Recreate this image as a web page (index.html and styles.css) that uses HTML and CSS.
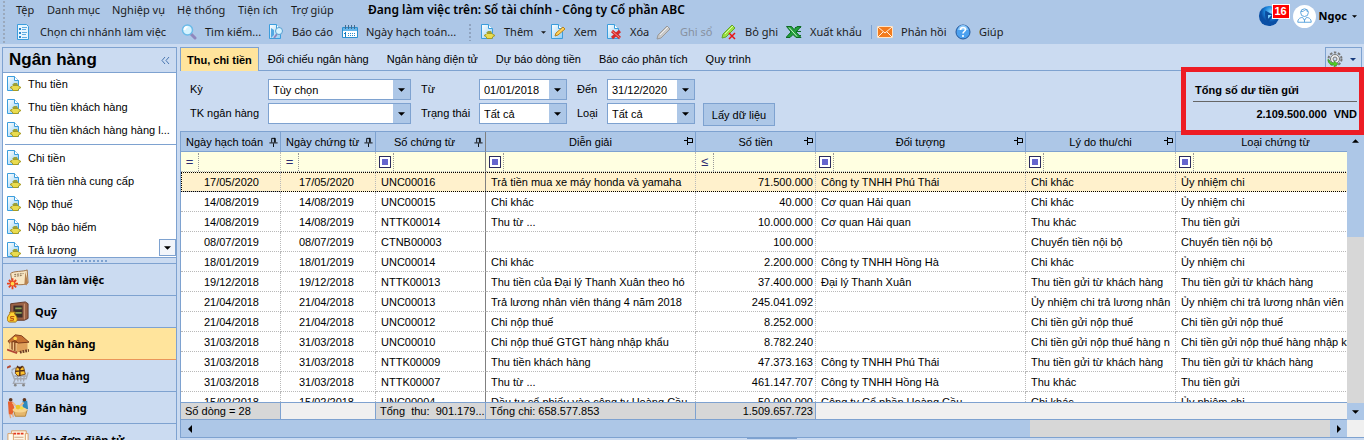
FILE: index.html
```html
<!DOCTYPE html>
<html lang="vi">
<head>
<meta charset="utf-8">
<title>Ngân hàng</title>
<link rel="stylesheet" href="styles.css">
</head>
<body>
<svg class="defs" aria-hidden="true">
  <defs>
    <linearGradient id="page" x2="1" y2="1"><stop offset="0" stop-color="#fff"/><stop offset="1" stop-color="#8fcdf3"/></linearGradient>
    <radialGradient id="ball" cx=".6" cy=".3"><stop offset="0" stop-color="#7fd4ff"/><stop offset=".6" stop-color="#1c86dc"/><stop offset="1" stop-color="#0a4fa5"/></radialGradient>
  </defs>
  <symbol id="doc" viewBox="0 0 16 16"><path d="M1.500.500h7l4 4v10h-11z" fill="url(#page)" stroke="#3b9ddd"/><path d="M8.500.500v4h4" fill="#fff" stroke="#3b9ddd"/></symbol>
  <symbol id="doc-coin" viewBox="0 0 16 16"><use href="#doc" width="16" height="16"/><path d="M6 9l2-2h3l1 2z" fill="#9aa23c"/><path d="M4 11.500l2-1 1-1h5l1 1 2 1-2 1-1 2H7l-1-2z" fill="#e9dc4f" stroke="#a79b22"/></symbol>
  <symbol id="caret" viewBox="0 0 8 4"><path d="M0 0h8L4 4z" fill="currentColor"/></symbol>
  <symbol id="pin-v" viewBox="0 0 9 11"><path d="M2.500 6V1.500h4V6M5.500 1v5M0 6.500h9M4.500 7v4" fill="none" stroke="#000"/></symbol>
  <symbol id="pin-h" viewBox="0 0 9 8"><path d="M4 1.500h4.500v4H4M4 5.500h5M3.500 0v8M0 3.500h3" fill="none" stroke="#000"/></symbol>
</svg>

<header class="top">
  <div class="bars">
    <nav class="menu">
      <a href="#">Tệp</a><a href="#">Danh mục</a><a href="#">Nghiệp vụ</a><a href="#">Hệ thống</a><a href="#">Tiện ích</a><a href="#">Trợ giúp</a>
      <strong>Đang làm việc trên: Sổ tài chính - Công ty Cổ phần ABC</strong>
    </nav>
    <div class="tools">
      <button><svg viewBox="0 0 16 16"><path d="M1.500.500h9l2 2v13h-11z" fill="#e6f5ff" stroke="#3b9ddd"/><path d="M3 4h2v2H3zm0 4h2v2H3zm0 4h2v2H3z" fill="#2b86c9"/><path d="M6 3.500h5M6 5.500h4M6 8.500h5M6 10.500h4M6 13.500h5" stroke="#61aee2"/></svg>Chọn chi nhánh làm việc</button>
      <button><svg viewBox="0 0 16 16"><path d="M10 10l4 4" stroke="#8f87bd" stroke-width="3" stroke-linecap="round"/><circle cx="6.500" cy="6" r="5" fill="#d5f3ff" stroke="#6bbbe8" stroke-width="1.500"/><path d="M3.500 6a3 3 0 013-3" stroke="#fff" stroke-width="2" fill="none"/></svg>Tìm kiếm...</button>
      <button><svg viewBox="0 0 16 16"><use href="#doc" width="16" height="16"/><path d="M3 4v10l3-3V6z" fill="#52a8e2"/><path d="M9 10l-3 4" stroke="#8f87bd" stroke-width="2"/><circle cx="11" cy="7" r="3.500" fill="#d5f3ff" stroke="#569ed0"/></svg>Báo cáo</button>
      <button><svg viewBox="0 0 16 16"><path d="M.500 3.500h15v10H.500z" fill="#fff" stroke="#2b8fce"/><path d="M1 4h14v3H1z" fill="#64b5ea"/><path d="M3.500 1v4M6.500 1v4M9.500 1v4M12.500 1v4" stroke="#456b8c"/><path d="M3.500 8v5M2 9.500h2" stroke="#1479c0"/><path d="M6 9.500h8M6 11.500h8" stroke="#2b8fce" stroke-dasharray="1 1"/></svg>Ngày hạch toán...</button>
      <button class="add"><svg viewBox="0 0 16 16"><use href="#doc-coin" width="16" height="16"/></svg>Thêm<svg class="caret"><use href="#caret"/></svg></button>
      <button><svg viewBox="0 0 16 16"><use href="#doc" width="16" height="16"/><path d="M5 12l1-3 7-6 2 2-7 6z" fill="#ffd25a" stroke="#b88220"/></svg>Xem</button>
      <button><svg viewBox="0 0 16 16"><use href="#doc" width="16" height="16"/><path d="M6 7l8 7M14 7l-8 7" stroke="#d52b2b" stroke-width="3"/><path d="M6.500 7.500l7 6" stroke="#ff8f86"/></svg>Xóa</button>
      <button disabled><svg viewBox="0 0 16 16"><path d="M1 15l1-4 9-9 3 3-9 9z" fill="#c9c9c9" stroke="#999"/><path d="M4 11l8-8" stroke="#eee"/></svg>Ghi sổ</button>
      <button><svg viewBox="0 0 16 16"><path d="M1 14l1-4 9-9 3 3-9 9z" fill="#9be044" stroke="#63a62a"/><path d="M4 10l8-8" stroke="#dbffa4"/><path d="M8 9l6 6M14 9l-6 6" stroke="#e81313" stroke-width="1.500"/></svg>Bỏ ghi</button>
      <button><svg viewBox="0 0 16 16"><path d="M9 3.500h6M11 7.500h4M11 11.500h4" stroke="#0f6a24"/><path d="M.500 2.500h5l2.500 3 3-3h4l-5 5.500 5 5.500h-5l-3-3-3 3h-4l5-5.500z" fill="#21a03a" stroke="#0f6a24"/><path d="M3 3.500l8 9" stroke="#c7efc9"/></svg>Xuất khẩu</button>
      <button class="mail"><svg viewBox="0 0 16 16"><path d="M.500 2.500h15v11H.500z" fill="#f37b1d" stroke="#ffe4c5"/><path d="M1 3l7 6 7-6M1 13l5-5M15 13l-5-5" fill="none" stroke="#fff3e4"/></svg>Phản hồi</button>
      <button><svg viewBox="0 0 16 16"><circle cx="8" cy="8" r="7" fill="#4ba0ef" stroke="#24589b"/><path d="M3 6a5 5 0 0110 0z" fill="#8bc8fb"/><path d="M5.500 6c0-3.500 5-3 5-.500C10.500 7.500 8 7.500 8 9.500M8 11v2" fill="none" stroke="#fff" stroke-width="1.600"/></svg>Giúp</button>
    </div>
  </div>
  <div class="account">
    <span class="bell"><svg viewBox="0 0 24 24"><circle cx="12" cy="12" r="11" fill="url(#ball)"/><path d="M8 6l9 5-6 8c-3-3-4-8-3-13z" fill="#0c4d9f"/><path d="M11 11h4l-4 4z" fill="#7fd4ff"/></svg><b>16</b></span>
    <svg class="avatar" viewBox="0 0 24 24"><circle cx="12" cy="12" r="12" fill="#fff"/><circle cx="12" cy="8" r="4" fill="none" stroke="#5aa3dc"/><path d="M8 7c2 0 4-1 5-2 1 1 2 2 3 2M5 18c0-4 3-5 5-5l2 3 2-3c2 0 5 1 5 5zM12 15v3" fill="none" stroke="#5aa3dc"/></svg>
    <button>Ngọc<svg class="caret"><use href="#caret"/></svg></button>
  </div>
</header>

<main class="work">
  <aside class="side">
    <div class="side-head"><h1>Ngân hàng</h1><button aria-label="Thu gọn"><svg viewBox="0 0 9 7"><path d="M4 0L1 3.500 4 7M8 0L5 3.500 8 7" fill="none" stroke="#4a76b0"/></svg></button></div>
    <div class="links">
      <ul>
        <li><a href="#"><svg><use href="#doc-coin"/></svg>Thu tiền</a></li>
        <li><a href="#"><svg><use href="#doc-coin"/></svg>Thu tiền khách hàng</a></li>
        <li><a href="#"><svg><use href="#doc-coin"/></svg>Thu tiền khách hàng hàng l...</a></li>
      </ul>
      <ul>
        <li><a href="#"><svg><use href="#doc-coin"/></svg>Chi tiền</a></li>
        <li><a href="#"><svg><use href="#doc-coin"/></svg>Trả tiền nhà cung cấp</a></li>
        <li><a href="#"><svg><use href="#doc-coin"/></svg>Nộp thuế</a></li>
        <li><a href="#"><svg><use href="#doc-coin"/></svg>Nộp bảo hiểm</a></li>
        <li><a href="#"><svg><use href="#doc-coin"/></svg>Trả lương</a></li>
      </ul>
      <button class="more" aria-label="Cuộn xuống"><svg class="caret"><use href="#caret"/></svg></button>
    </div>
    <div class="splitter"></div>
    <nav class="modules">
      <a href="#"><svg viewBox="0 0 24 24"><path d="M4 5c2-3 15-2 18-4l1 14c-3 3-12 2-17 2z" fill="#f7e6c4" stroke="#9b6b3b"/><path d="M20 3l3 12-2 3-2-2z" fill="#b88350"/><path d="M8 6l10-1M8 8l9-1" stroke="#786044" stroke-dasharray="2 1"/><path d="M6 10v12M0 16h12M2 12l8 8M10 12l-8 8" stroke="#e9441e" stroke-width="2"/><circle cx="6" cy="16" r="2" fill="#ffd84c"/></svg>Bàn làm việc</a>
      <a href="#"><svg viewBox="0 0 24 24"><path d="M4 3l16-2 3 2v16l-4 2H4z" fill="#9b6246" stroke="#5f3524"/><path d="M7 5h10v13H7z" fill="#3a2d28"/><path d="M9 8h7M9 13h7" stroke="#8ca052" stroke-width="2"/><path d="M19 3v17" stroke="#d09c7a"/><path d="M3 12h6l-1 2c5 4 3 9 1 9H3c-3 0-4-5 0-9z" fill="#ffd335" stroke="#a36c13"/><path d="M8 17H4v2h3v2H3" fill="none" stroke="#b1400c"/></svg>Quỹ</a>
      <a href="#" class="on"><svg viewBox="0 0 24 24"><path d="M3 9l8-5 11 5v9l-11 3-8-4z" fill="#8a4a20"/><path d="M10 11l12-1v8l-11 3z" fill="#e0a05a"/><path d="M1 9l8-7 7 1 8 7-12 1-3-3-6 3z" fill="#c87332" stroke="#7a3819"/><path d="M4 10v8M7 10v9M10 11v9" stroke="#f1c488" stroke-width="1.500"/><path d="M0 18l11 4" stroke="#b24735" stroke-width="2"/><path d="M14 21l10-2" stroke="#6b3a22" stroke-width="3" stroke-dasharray="2 1"/><circle cx="9" cy="6" r="2" fill="#ffd84c"/></svg>Ngân hàng</a>
      <a href="#"><svg viewBox="0 0 24 24"><path d="M0 3l4-1M5 6c2-3 5-3 6-2M5 7l3 8h13l2-7M9 15l-2 5h13M8 12h13M11 11l1 7M15 11v7M19 11l-1 7" fill="none" stroke="#a4a8b2" stroke-width="1.500"/><path d="M0 3l4-2" stroke="#b64b36" stroke-width="2"/><circle cx="9" cy="22" r="1.500" fill="#888"/><circle cx="18" cy="22" r="1.500" fill="#888"/><path d="M10 3l8-1 2 8-8 2-3-3z" fill="#ffc32d" stroke="#76461a"/><path d="M14 2v10M9 7l10-1M14 4l-3-3M14 4l3-3" stroke="#4f2b19" stroke-width="1.500"/></svg>Mua hàng</a>
      <a href="#"><svg viewBox="0 0 24 24"><path d="M1 5h5l2 7-2 7H2z" fill="#e8612e"/><path d="M3 19l1 4M6 18l1 4" stroke="#e8a878" stroke-width="1.500"/><path d="M17 4h5l1 9h-6z" fill="#2f89bd"/><circle cx="4" cy="3" r="2" fill="#613720"/><circle cx="19" cy="3" r="2" fill="#613720"/><path d="M6 6l5 5M18 6l-5 5" stroke="#f0b986" stroke-width="2"/><path d="M7 14h15l-2 7H9z" fill="#e5b66b" stroke="#b58134"/><ellipse cx="14" cy="14" rx="8" ry="3" fill="#f8d58d"/><circle cx="12" cy="11" r="2.500" fill="#e9c52a"/><circle cx="16" cy="12" r="2" fill="#f4dd48"/></svg>Bán hàng</a>
      <a href="#"><svg viewBox="0 0 24 24"><path d="M5 2h16v20H5z" fill="#fff7e5" stroke="#d89b61"/><path d="M1 5h6v18H1zM20 5h3v18h-3z" fill="#fffaf0" stroke="#d89b61"/><path d="M7 5h12" stroke="#e2361d" stroke-width="2" stroke-dasharray="3 1"/><path d="M8 9h10M8 12h10" stroke="#ca9d7b"/></svg>Hóa đơn điện tử</a>
    </nav>
  </aside>

  <section class="content">
    <div class="tabs">
      <button class="on">Thu, chi tiền</button><button>Đối chiếu ngân hàng</button><button>Ngân hàng điện tử</button><button>Dự báo dòng tiền</button><button>Báo cáo phân tích</button><button>Quy trình</button>
      <button class="gear" aria-label="Tùy chỉnh"><svg viewBox="0 0 16 16"><circle cx="8" cy="8" r="6.500" fill="none" stroke="#777" stroke-width="2" stroke-dasharray="2.500 1.600"/><circle cx="8" cy="8" r="4.500" fill="#eee" stroke="#777"/><circle cx="8" cy="8" r="2" fill="#cbdbf1" stroke="#777"/><path d="M1 8c0 5 3 6 6 6v2l4-3-4-3v2c-2 0-4-1-6-4z" fill="#55cc27" stroke="#2c8f16" stroke-width=".5"/></svg><svg class="caret"><use href="#caret"/></svg></button>
    </div>

    <form class="filters">
      <label for="ky">Kỳ</label>
      <span class="combo"><select id="ky"><option>Tùy chọn</option></select><svg class="caret"><use href="#caret"/></svg></span>
      <label for="tu">Từ</label>
      <span class="combo"><input id="tu" type="text" value="01/01/2018"><svg class="caret"><use href="#caret"/></svg></span>
      <label for="den">Đến</label>
      <span class="combo"><input id="den" type="text" value="31/12/2020"><svg class="caret"><use href="#caret"/></svg></span>
      <label class="line2" for="tk">TK ngân hàng</label>
      <span class="combo"><select id="tk"><option></option></select><svg class="caret"><use href="#caret"/></svg></span>
      <label for="tt">Trạng thái</label>
      <span class="combo"><select id="tt"><option>Tất cả</option></select><svg class="caret"><use href="#caret"/></svg></span>
      <label for="loai">Loại</label>
      <span class="combo"><select id="loai"><option>Tất cả</option></select><svg class="caret"><use href="#caret"/></svg></span>
      <button type="button">Lấy dữ liệu</button>
    </form>

    <div class="total">
      <h2>Tổng số dư tiền gửi</h2>
      <p><span>2.109.500.000</span><span>VND</span></p>
    </div>

    <div class="grid">
      <div class="rows">
        <table>
          <colgroup><col class="w100"><col class="w95"><col class="w110"><col class="w210"><col class="w120"><col class="w210"><col class="w150"><col class="w200"></colgroup>
          <thead>
            <tr>
              <th><div>Ngày hạch toán<svg class="pv"><use href="#pin-v"/></svg></div></th>
              <th><div>Ngày chứng từ<svg class="pv"><use href="#pin-v"/></svg></div></th>
              <th><div>Số chứng từ<svg class="pv"><use href="#pin-v"/></svg></div></th>
              <th><div>Diễn giải<svg class="ph"><use href="#pin-h"/></svg></div></th>
              <th><div>Số tiền<svg class="ph"><use href="#pin-h"/></svg></div></th>
              <th><div>Đối tượng<svg class="ph"><use href="#pin-h"/></svg></div></th>
              <th><div>Lý do thu/chi<svg class="ph"><use href="#pin-h"/></svg></div></th>
              <th><div>Loại chứng từ</div></th>
            </tr>
            <tr class="query">
              <td><span>=</span></td><td><span>=</span></td><td><span><i></i></span></td><td><span><i></i></span></td><td><span>≤</span></td><td><span><i></i></span></td><td><span><i></i></span></td><td><span><i></i></span></td>
            </tr>
          </thead>
          <tbody>
            <tr class="current"><td>17/05/2020</td><td>17/05/2020</td><td>UNC00016</td><td>Trả tiền mua xe máy honda và yamaha</td><td>71.500.000</td><td>Công ty TNHH Phú Thái</td><td>Chi khác</td><td>Ủy nhiệm chi</td></tr>
            <tr><td>14/08/2019</td><td>14/08/2019</td><td>UNC00015</td><td>Chi khác</td><td>40.000</td><td>Cơ quan Hải quan</td><td>Chi khác</td><td>Ủy nhiệm chi</td></tr>
            <tr><td>14/08/2019</td><td>14/08/2019</td><td>NTTK00014</td><td>Thu từ ...</td><td>10.000.000</td><td>Cơ quan Hải quan</td><td>Thu khác</td><td>Thu tiền gửi</td></tr>
            <tr><td>08/07/2019</td><td>08/07/2019</td><td>CTNB00003</td><td></td><td>100.000</td><td></td><td>Chuyển tiền nội bộ</td><td>Chuyển tiền nội bộ</td></tr>
            <tr><td>18/01/2019</td><td>18/01/2019</td><td>UNC00014</td><td>Chi khác</td><td>2.200.000</td><td>Công ty TNHH Hồng Hà</td><td>Chi khác</td><td>Ủy nhiệm chi</td></tr>
            <tr><td>19/12/2018</td><td>19/12/2018</td><td>NTTK00013</td><td>Thu tiền của Đại lý Thanh Xuân theo hó</td><td>37.400.000</td><td>Đại lý Thanh Xuân</td><td>Thu tiền gửi từ khách hàng</td><td>Thu tiền gửi từ khách hàng</td></tr>
            <tr><td>21/04/2018</td><td>21/04/2018</td><td>UNC00013</td><td>Trả lương nhân viên tháng 4 năm 2018</td><td>245.041.092</td><td></td><td>Ủy nhiệm chi trả lương nhân</td><td>Ủy nhiệm chi trả lương nhân viên</td></tr>
            <tr><td>21/04/2018</td><td>21/04/2018</td><td>UNC00012</td><td>Chi nộp thuế</td><td>8.252.000</td><td></td><td>Chi tiền gửi nộp thuế</td><td>Chi tiền gửi nộp thuế</td></tr>
            <tr><td>31/03/2018</td><td>31/03/2018</td><td>UNC00010</td><td>Chi nộp thuế GTGT hàng nhập khẩu</td><td>8.782.240</td><td></td><td>Chi tiền gửi nộp thuế hàng n</td><td>Chi tiền gửi nộp thuế hàng nhập khẩu</td></tr>
            <tr><td>31/03/2018</td><td>31/03/2018</td><td>NTTK00009</td><td>Thu tiền khách hàng</td><td>47.373.163</td><td>Công ty TNHH Phú Thái</td><td>Thu tiền gửi từ khách hàng</td><td>Thu tiền gửi từ khách hàng</td></tr>
            <tr><td>31/03/2018</td><td>31/03/2018</td><td>NTTK00007</td><td>Thu từ ...</td><td>461.147.707</td><td>Công ty TNHH Hồng Hà</td><td>Thu khác</td><td>Thu tiền gửi</td></tr>
            <tr><td>15/02/2018</td><td>15/02/2018</td><td>UNC00004</td><td>Đầu tư cổ phiếu vào công ty Hoàng Cầu</td><td>50.000.000</td><td>Công ty Cổ phần Hoàng Cầu</td><td>Chi khác</td><td>Ủy nhiệm chi</td></tr>
          </tbody>
        </table>
      </div>
      <div class="vscroll"><button aria-label="Lên"><svg class="caret up"><use href="#caret"/></svg></button><div class="vthumb"></div><div class="vtrack"></div><button aria-label="Xuống"><svg class="caret"><use href="#caret"/></svg></button></div>
      <div class="sums">
        <table>
          <colgroup><col class="w100"><col class="w95"><col class="w110"><col class="w210"><col class="w120"><col class="w210"><col class="w150"><col class="w200"></colgroup>
          <tbody><tr><td class="sum">Số dòng = 28</td><td></td><td class="sum">Tổng &nbsp;thu: &nbsp;901.179....</td><td class="sum">Tổng chi: 658.577.853</td><td class="sum">1.509.657.723</td><td class="open"></td><td class="open"></td><td class="open"></td></tr></tbody>
        </table>
      </div>
      <div class="hscroll"><button aria-label="Trái"><svg viewBox="0 0 4 8"><path d="M4 0v8L0 4z"/></svg></button><div class="hthumb"></div><div class="htrack"></div><button aria-label="Phải"><svg viewBox="0 0 4 8"><path d="M0 0v8l4-4z"/></svg></button></div>
      <div class="corner"></div>
    </div>
    <div class="handle"></div>
  </section>
</main>
</body>
</html>
```
FILE: styles.css
```css
:root {
  --bar: #adc7e7;
  --pane: #cbdbf1;
  --line: #7ea2d0;
  --ui: "Noto Sans", sans-serif;
  --grid: "Liberation Sans", Arial, sans-serif;
}

* { box-sizing: border-box; }

body {
  margin: 0;
  height: 100vh;
  display: flex;
  flex-direction: column;
  overflow: hidden;
  background: var(--pane);
  color: #000;
  font: 11px/16px var(--grid);
}

a { color: inherit; text-decoration: none; }
button { border: 0; padding: 0; background: none; color: inherit; font: inherit; }
svg { flex: none; display: block; }
h1, h2, p, ul { margin: 0; padding: 0; }
li { list-style: none; }
.defs { position: absolute; width: 0; height: 0; }
.caret { width: 8px; height: 4px; }

/* Menu and toolbar */
.top {
  display: flex;
  justify-content: space-between;
  height: 44px;
  flex: none;
  background: var(--bar);
  font: 11px/20px var(--ui);
  color: #1b1b1b;
}
.bars {
  padding-left: 16px;
  background: radial-gradient(circle, #9aa9bd 1px, transparent 1px) 2px 0 / 4px 4px repeat-y;
}
.menu {
  display: grid;
  grid-template-columns: 31px 65px 65px 61px 53px 77px auto;
  white-space: nowrap;
}
.menu strong { color: #000; font-size: 12px; font-weight: 600; }
.tools {
  display: grid;
  grid-template-columns: 165px 87px 74px 138px 70px 56px 50px 65px 65px 91px 78px auto;
  padding-top: 1px;
}
.tools button {
  display: flex;
  align-items: center;
  gap: 8px;
  height: 22px;
  white-space: nowrap;
}
.tools button > svg:first-child { width: 16px; height: 16px; }
.tools button:disabled { color: #8791a0; }
.tools .add { position: relative; }
.tools .add::before {
  content: "";
  position: absolute;
  left: -12px;
  top: 2px;
  width: 5px;
  height: 18px;
  background: radial-gradient(circle, #8fa3bf 1px, transparent 1px) 0 0 / 4px 4px;
}
.tools .caret { width: 5px; height: 3px; }
.mail { position: relative; }
.mail::before {
  content: "";
  position: absolute;
  left: -6px;
  top: 4px;
  width: 1px;
  height: 14px;
  background: var(--line);
}
.account {
  display: flex;
  align-items: center;
  height: 32px;
  padding-right: 7px;
  font: bold 11px/20px var(--ui);
}
.account button { display: flex; align-items: center; gap: 5px; margin-left: 3px; color: #000; }
.account .caret { width: 5px; height: 3px; }
.bell { position: relative; width: 35px; }
.bell svg { width: 22px; height: 22px; }
.bell b {
  position: absolute;
  left: 14px;
  top: -1px;
  width: 18px;
  height: 15px;
  border: 1px solid #fff;
  background: #f00;
  color: #fff;
  font: bold 11px/13px var(--grid);
  text-align: center;
}
.avatar { width: 23px; height: 23px; }

/* Frame */
.work {
  flex: 1;
  min-height: 0;
  display: flex;
  gap: 3px;
  padding: 3px 0 0 2px;
}

/* Sidebar */
.side {
  width: 175px;
  flex: none;
  display: flex;
  flex-direction: column;
  overflow: hidden;
  border: 1px solid var(--line);
  border-bottom: 0;
}
.side-head {
  display: flex;
  align-items: center;
  justify-content: space-between;
  height: 25px;
  flex: none;
  padding: 0 6px;
  border-bottom: 1px solid var(--line);
}
.side-head h1 { font: bold 17px/24px var(--grid); }
.side-head svg { width: 9px; height: 7px; }
.links {
  position: relative;
  height: 184px;
  flex: none;
  overflow: hidden;
  background: #fff;
}
.links ul + ul { border-top: 1px solid var(--line); margin: 2px 0 0 2px; padding-top: 2px; }
.links ul + ul a { padding-left: 1px; }
.links a {
  display: flex;
  align-items: center;
  gap: 6px;
  height: 23px;
  padding: 0 0 2px 3px;
  white-space: nowrap;
}
.links a svg { width: 16px; height: 16px; }
.more {
  position: absolute;
  right: 0;
  bottom: 1px;
  display: grid;
  place-items: center;
  width: 17px;
  height: 17px;
  border: 1px solid var(--line);
  background: #f2f5fa;
}
.splitter {
  height: 6px;
  flex: none;
  border-top: 1px solid var(--line);
  background: repeating-linear-gradient(90deg, var(--line) 0 2px, transparent 2px 4px) center 2px / 34px 2px no-repeat;
}
.modules a {
  display: flex;
  align-items: center;
  gap: 6px;
  height: 32px;
  padding-left: 4px;
  border-top: 1px solid var(--line);
  font: bold 11px/20px var(--ui);
}
.modules .on { background: #ffe49c; }
.modules .on + a { border-color: #e9965a; }
.modules svg { width: 22px; height: 22px; }

/* Tabs */
.content {
  position: relative;
  flex: 1;
  min-width: 0;
  display: flex;
  flex-direction: column;
}
.tabs {
  display: flex;
  height: 24px;
  flex: none;
  padding-right: 2px;
  border-bottom: 1px solid var(--line);
}
.tabs button { padding: 0 9px; white-space: nowrap; }
.tabs .on {
  padding: 0 6px;
  height: 24px;
  border: 1px solid var(--line);
  border-bottom: 0;
  background: #ffe49c;
  font-weight: bold;
}
.tabs .gear {
  display: flex;
  align-items: center;
  gap: 7px;
  width: 37px;
  margin-left: auto;
  padding: 0 1px;
  border: 1px solid var(--line);
  border-bottom: 0;
}
.gear svg:first-child { width: 16px; height: 16px; }
.gear .caret { width: 6px; height: 3px; color: #173a7c; }

/* Filter form */
.filters {
  display: grid;
  grid-template-columns: 78px 143px 68px 88px 40px 88px auto;
  justify-content: start;
  gap: 3px 0;
  padding: 8px 10px 7px;
}
.filters label { line-height: 21px; padding-left: 10px; }
.filters label:first-child, .filters .line2 { grid-column: 1; padding-left: 0; }
.combo {
  display: flex;
  align-items: center;
  height: 21px;
  padding-right: 5px;
  border: 1px solid var(--line);
  background: var(--bar);
}
.combo select, .combo input {
  appearance: none;
  flex: 1;
  min-width: 0;
  width: 0;
  height: 19px;
  margin: 0 5px 0 0;
  padding: 0 0 0 4px;
  border: 0;
  border-radius: 0;
  background: #fff;
  color: #000;
  font: inherit;
}
.combo .caret { width: 7px; }
.filters button {
  width: 72px;
  height: 23px;
  margin: 0 0 -2px 8px;
  border: 1px solid var(--line);
  background: var(--bar);
}

/* Balance box */
.total {
  position: absolute;
  right: 0;
  top: 20px;
  z-index: 1;
  width: 183px;
  padding: 10px 2px 8px 7px;
  border: 5px solid #ed1c24;
  background: var(--pane);
  font-weight: bold;
}
.total h2 { padding: 0 2px 3px; border-bottom: 1px solid #666; font: inherit; }
.total p { display: flex; justify-content: flex-end; gap: 7px; padding-top: 4px; }

/* Data grid */
.grid {
  flex: 1;
  min-height: 0;
  display: grid;
  grid-template-columns: minmax(0, 1fr) 17px;
  grid-template-rows: minmax(0, 1fr) 18px 17px;
  border: solid var(--line);
  border-width: 1px 0 1px 1px;
}
.rows, .sums { overflow: hidden; background: #fff; }
table { width: 1195px; table-layout: fixed; border-spacing: 0; }
.w95 { width: 95px; }
.w100 { width: 100px; }
.w110 { width: 110px; }
.w120 { width: 120px; }
.w150 { width: 150px; }
.w200 { width: 200px; }
.w210 { width: 210px; }
th, td { padding: 0 5px; white-space: nowrap; overflow: hidden; text-align: left; }
th {
  height: 20px;
  border: solid var(--line);
  border-width: 0 1px 1px 0;
  background: var(--bar);
  font-weight: normal;
}
th div { position: relative; padding-right: 12px; text-align: center; }
th:nth-child(n+4) div { padding-right: 0; }
th svg { position: absolute; right: -3px; top: 3px; width: 9px; height: 8px; }
th .pv { height: 10px; }
td { height: 20px; border: dotted #b9b9b9; border-width: 0 1px 1px 0; }
th:nth-child(3), td:nth-child(3) { border-right: 1px solid #808080; }
tbody td:nth-child(1), tbody td:nth-child(2) { text-align: right; padding-right: 21px; }
tbody td:nth-child(5) { text-align: right; padding: 0 2px; }
.query td { padding: 0; background: #ffffe1; }
.query span {
  display: grid;
  place-items: center;
  width: 18px;
  height: 18px;
  border-right: 1px dotted #999;
  color: #2b2b70;
  font-size: 13px;
}
.query i { width: 12px; height: 12px; border: 1px solid #2b2b5e; background: #6565cd; box-shadow: inset 0 0 0 2px #fff; }
.current { background: #fff1cc; outline: 1px dotted #000; outline-offset: -1px; }

.sums, .hscroll { min-height: 0; }
.sums { grid-row: 2; border: solid var(--line); border-width: 1px 0; }
.sums td { height: 16px; line-height: 15px; padding: 0 4px; background: #f0f0f0; border: 0 solid var(--line); border-right-width: 1px; }
.sums .sum { background: #d7d7d7; }
.sums .open { border: 0; }
.sums tbody td:first-child { text-align: left; }

.vscroll { grid-area: 1 / 2 / 3 / 3; display: flex; flex-direction: column; background: var(--bar); }
.vscroll button { display: grid; place-items: center; height: 17px; flex: none; }
.vscroll .caret, .more .caret { width: 7px; }
.up { transform: rotate(180deg); }
.vthumb { flex: 88; }
.vtrack { flex: 166; background: #d7d7d7; }
.hscroll { grid-area: 3 / 1 / 4 / 2; display: flex; background: var(--bar); }
.hscroll button { display: grid; place-items: center; width: 17px; flex: none; }
.hscroll svg { width: 4px; height: 8px; }
.hthumb { flex: 831; }
.htrack { flex: 299; background: #d7d7d7; }
.corner { grid-area: 3 / 2 / 4 / 3; background: #f0f0f0; }
.handle { height: 2px; flex: none; background: linear-gradient(var(--line), var(--line)) center 0 / 50px 1px no-repeat; }
```
